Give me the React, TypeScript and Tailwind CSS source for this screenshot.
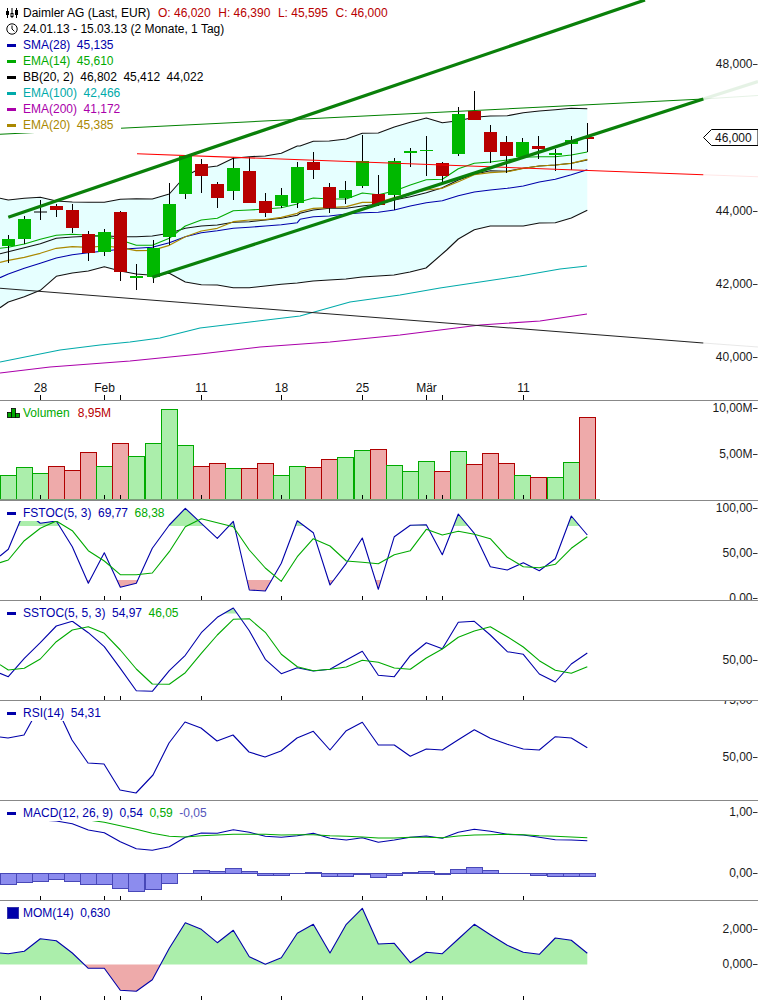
import React from "react";

const CX = Array.from({ length: 37 }, (_, i) => Math.floor(8.3 + 16.08 * i));
const TICKS = [40, 104, 120, 201, 281, 362, 426, 442, 523];
const BLUE = "#0000aa";
const GREEN = "#00aa00";
const P: [number, number, number, number, number][] = [
  [235, 263, 239, 246, 1], [216, 244, 219, 239, 1], [200, 220, 211.5, 212.5, 2], [204, 217, 206, 210, 0],
  [204, 233, 210, 228, 0], [231, 261, 234, 253, 0], [229, 256, 232, 252, 1], [211, 281, 212, 272, 0],
  [264, 290, 276, 278, 1], [240, 283, 248, 277, 1], [183, 245, 204, 237, 1], [155, 199, 156, 194, 1],
  [159, 193, 164, 176, 0], [182, 208, 184, 198, 0], [157, 200, 168, 191, 1], [157, 203, 171, 203, 0],
  [193, 217, 201, 213, 0], [188, 208, 195, 206, 1], [162, 208, 167, 203, 1], [152, 179, 162, 170, 0],
  [183, 213, 187, 208, 0], [181, 204, 190, 198, 1], [135, 188, 161, 186, 1], [175, 206, 194, 205, 0],
  [158, 210, 161, 195, 1], [148, 167, 151, 153, 1], [136, 176, 150, 151, 1], [162, 183, 163, 176, 0],
  [107, 156, 114, 154, 1], [91, 120, 111, 120, 0], [125, 163, 132, 152, 0], [136, 173, 142, 156, 0],
  [138, 157, 142, 157, 1], [136, 159, 146, 149, 0], [149, 171, 153, 155, 1], [136, 170, 140, 144, 1], [123, 152, 137, 139, 0],
];
const VOL: [number, number][] = [
  [475, 1], [467, 1], [473, 1], [466, 0], [470, 0], [452, 0], [466, 1], [443, 0], [456, 1], [443, 1], [409, 1], [445, 1], [466, 0],
  [463, 0], [468, 1], [468, 0], [463, 0], [475, 1], [466, 1], [467, 0], [459, 0], [457, 1], [450, 1], [449, 0], [465, 1], [471, 1],
  [461, 1], [471, 0], [451, 1], [464, 0], [453, 0], [463, 0], [475, 1], [477, 0], [477, 1], [462, 1], [417, 0],
];
const HIST = [884, 882, 881, 879, 881, 884, 884, 888, 891, 889, 883, 873, 870, 871, 868, 871, 875, 875, 873, 872, 876, 876, 874, 877, 875, 872, 871, 874, 869, 867, 870, 873, 873, 875, 876, 876, 876];

type Pt = [number, number];
const z = (ox: number, oy: number, a: Pt[]): Pt[] => a.map(([x, y]) => [ox + x / 3, oy + y / 3]);
const s = (a: Pt[]) => a.map(([x, y]) => `${x.toFixed(1)},${y.toFixed(1)}`).join(" ");
const join = (oy: number, a: Pt[], b: Pt[]) => [...z(0, oy, a), ...z(300, oy, b)];

const UPPER = join(140, [[0, 175], [25, 180], [73, 175], [121, 172], [169, 183], [217, 186], [265, 187], [313, 187], [361, 178], [409, 176], [457, 177], [508, 162], [556, 108], [604, 84], [652, 78], [700, 55], [748, 50], [796, 48], [844, 40], [892, 18]], []).concat(
  z(300, 80, [[0, 198], [40, 184], [88, 183], [139, 177], [187, 160], [235, 159], [283, 141], [331, 127], [379, 114], [427, 128], [475, 122], [523, 112], [571, 108], [622, 107], [670, 98], [718, 93], [766, 89], [814, 85], [862, 86]]));
const LOWER = join(140, [[0, 503], [25, 486], [73, 470], [121, 451], [169, 409], [217, 399], [265, 393], [313, 380], [361, 393], [409, 402], [457, 406], [508, 400], [556, 426], [604, 434], [652, 435], [700, 443], [748, 443], [796, 438], [844, 433], [892, 429]], []).concat(
  [[313, 281], [329, 280], [346, 279], [362, 277], [378, 276], [394, 275], [410, 272], [426, 268]] as Pt[],
  z(300, 80, [[440, 510], [475, 477], [523, 449], [571, 438], [622, 438], [670, 438], [718, 429], [766, 428], [814, 414], [862, 391]]));
const MID = join(140, [[0, 341], [25, 335], [73, 323], [121, 311], [169, 295], [217, 291], [265, 289], [313, 287], [361, 290], [409, 290], [457, 288], [508, 280], [556, 265], [604, 258], [652, 255], [700, 247], [748, 245], [796, 240], [844, 235], [892, 226]], []).concat(
  z(300, 80, [[0, 400], [40, 390], [88, 385], [139, 385], [187, 378], [235, 372], [283, 360], [331, 350], [379, 338], [427, 323], [475, 300], [523, 283], [571, 272], [622, 274], [670, 265], [718, 258], [766, 255], [814, 250], [862, 240]]));
const E14 = join(140, [[0, 325], [25, 322], [73, 312], [121, 298], [169, 286], [217, 283], [265, 286], [313, 289], [361, 300], [409, 316], [457, 316], [508, 295], [556, 258], [604, 240], [652, 235], [700, 212], [748, 210], [796, 207], [844, 203], [892, 192]], []).concat(
  z(300, 80, [[0, 365], [40, 354], [88, 357], [139, 357], [187, 339], [235, 344], [283, 333], [331, 315], [379, 299], [427, 298], [475, 266], [523, 250], [571, 246], [622, 240], [670, 232], [718, 230], [766, 230], [814, 225], [862, 216]]));
const E20 = join(140, [[0, 367], [25, 361], [73, 352], [121, 340], [169, 325], [217, 320], [265, 322], [313, 318], [361, 323], [409, 332], [457, 331], [508, 316], [556, 290], [604, 273], [652, 265], [700, 245], [748, 240], [796, 239], [844, 232], [892, 220]], []).concat(
  z(300, 80, [[0, 395], [40, 385], [88, 383], [139, 380], [187, 367], [235, 367], [283, 353], [331, 340], [379, 330], [427, 325], [475, 305], [523, 284], [571, 278], [622, 275], [670, 265], [718, 258], [766, 255], [814, 250], [862, 238]]));
const S28 = join(140, [[0, 413], [25, 402], [73, 385], [121, 370], [169, 354], [217, 344], [265, 338], [313, 333], [361, 328], [409, 325], [457, 322], [508, 308], [556, 290], [604, 278], [652, 272], [700, 265], [748, 262], [796, 258], [844, 254], [892, 248]], []).concat(
  z(300, 80, [[0, 418], [40, 410], [88, 408], [139, 402], [187, 398], [235, 397], [283, 390], [331, 378], [379, 368], [427, 362], [475, 347], [523, 336], [571, 330], [622, 325], [670, 318], [718, 306], [766, 298], [814, 284], [862, 269]]));
const E100: Pt[] = [[0, 362], [60, 350], [100, 345], [130, 342], [160, 338], [200, 328], [250, 322], [300, 316], [350, 302], [400, 295], [440, 288], [480, 282], [520, 276], [560, 269], [587, 266]];
const E200: Pt[] = [[0, 373], [50, 367], [130, 361], [200, 354], [260, 347], [330, 342], [400, 335], [480, 325], [540, 321], [587, 314]];

const FB = join(500, [[0, 168], [25, 148], [73, 33], [121, 70], [169, 63], [217, 140], [265, 250], [313, 158], [361, 262], [409, 250], [457, 145], [508, 75], [556, 25], [604, 70], [652, 115], [700, 64], [748, 270], [796, 273], [844, 190], [892, 62]],
  [[40, 98], [90, 255], [139, 190], [187, 114], [235, 268], [283, 110], [331, 76], [379, 74], [427, 164], [475, 42], [523, 100], [571, 200], [622, 210], [670, 188], [718, 212], [766, 176], [814, 48], [862, 105]]);
const FG = join(500, [[0, 188], [25, 180], [73, 122], [121, 85], [169, 63], [217, 92], [265, 152], [313, 183], [361, 224], [409, 224], [457, 219], [508, 155], [556, 80], [604, 56], [652, 68], [700, 80], [748, 150], [796, 204], [844, 244], [892, 170]],
  [[40, 116], [90, 138], [139, 183], [187, 187], [235, 191], [283, 164], [331, 152], [379, 88], [427, 105], [475, 94], [523, 103], [571, 116], [622, 172], [670, 200], [718, 203], [766, 193], [814, 145], [862, 110]]);
const SB = join(500, [[0, 520], [25, 530], [73, 475], [121, 428], [169, 378], [217, 364], [265, 398], [313, 440], [361, 505], [409, 572], [457, 574], [508, 512], [556, 466], [604, 398], [652, 352], [700, 324], [748, 392], [796, 478], [844, 521], [892, 503]],
  [[40, 513], [90, 508], [139, 480], [187, 454], [235, 526], [283, 530], [331, 467], [379, 428], [427, 446], [475, 367], [523, 364], [571, 405], [622, 455], [670, 463], [718, 522], [766, 546], [814, 492], [862, 459]]);
const SG = join(500, [[0, 494], [25, 510], [73, 505], [121, 477], [169, 425], [217, 390], [265, 380], [313, 400], [361, 450], [409, 507], [457, 552], [508, 553], [556, 518], [604, 460], [652, 405], [700, 358], [748, 356], [796, 397], [844, 463], [892, 500]],
  [[40, 512], [90, 508], [139, 501], [187, 481], [235, 487], [283, 504], [331, 508], [379, 474], [427, 447], [475, 412], [523, 393], [571, 380], [622, 410], [670, 441], [718, 482], [766, 511], [814, 520], [862, 500]]);
const RSI: Pt[] = ([[0, 737], [8, 738], [24, 735], [40, 706], [56, 706], [72, 740], [88, 763], [104, 764], [120, 790], [136, 793], [153, 775], [169, 743], [185, 722], [201, 728], [217, 741], [233, 735], [249, 752], [265, 757], [281, 751], [297, 738]] as Pt[]).concat(
  z(300, 500, [[40, 694], [90, 750], [139, 692], [187, 667], [235, 735], [283, 735], [331, 769], [379, 747], [427, 750], [475, 719], [523, 689], [571, 715], [622, 733], [670, 747], [718, 750], [766, 710], [814, 714], [862, 743]]));
const MB = join(790, [[0, 82], [121, 90], [169, 93], [217, 101], [265, 120], [313, 128], [361, 155], [409, 176], [457, 181], [508, 170], [556, 142], [604, 129], [652, 130], [700, 119], [748, 127], [796, 139], [844, 142], [892, 137]],
  [[40, 130], [90, 145], [139, 150], [187, 143], [235, 157], [283, 150], [331, 142], [379, 138], [427, 145], [475, 127], [523, 118], [571, 124], [622, 133], [670, 135], [718, 142], [766, 149], [814, 150], [862, 152]]);
const MG = join(790, [[0, 50], [25, 60], [73, 68], [169, 78], [217, 85], [265, 90], [313, 97], [361, 107], [409, 118], [457, 130], [508, 139], [556, 141], [604, 137], [652, 135], [700, 133], [748, 133], [796, 133], [844, 135], [892, 134]],
  [[40, 134], [90, 137], [139, 139], [187, 141], [235, 144], [283, 144], [331, 142], [379, 142], [427, 143], [475, 138], [523, 135], [571, 134], [622, 133], [670, 134], [718, 137], [766, 139], [814, 141], [862, 143]]);
const MOM = join(790, [[0, 489], [25, 491], [73, 484], [121, 446], [169, 452], [217, 489], [265, 535], [313, 535], [361, 601], [409, 604], [457, 569], [508, 475], [556, 398], [604, 418], [652, 458], [700, 421], [748, 500], [796, 523], [844, 503], [892, 430]],
  [[40, 403], [90, 489], [139, 403], [187, 355], [235, 462], [283, 460], [331, 518], [379, 487], [427, 491], [475, 447], [523, 403], [571, 434], [622, 466], [670, 487], [718, 493], [766, 444], [814, 451], [862, 490]]);

const Line = ({ d, c, w = 1.1, o = 1 }: { d: Pt[]; c: string; w?: number; o?: number }) => (
  <polyline points={s(d)} fill="none" stroke={c} strokeWidth={w} strokeOpacity={o} strokeLinejoin="round" />
);

const Ticks = ({ y, h = 4 }: { y: number; h?: number }) => (
  <g>
    {TICKS.map((x) => (
      <rect key={x} x={x} y={y - h} width={1} height={h} fill="#000" />
    ))}
  </g>
);

const Axis = ({ items }: { items: [string, number][] }) => (
  <g>
    {items.map(([t, y]) => (
      <g key={t + y}>
        <text x={752.5} y={y + 4.3} textAnchor="end" fontSize={12} fill="#1a1a1a">
          {t}
        </text>
        <rect x={753} y={y} width={4.5} height={1} fill="#333333" />
      </g>
    ))}
  </g>
);

const Clipped = ({ id, box, d, base, fill }: { id: string; box: [number, number]; d: Pt[]; base: number; fill: string }) => (
  <g>
    <clipPath id={id}>
      <rect x={0} y={box[0]} width={758} height={box[1] - box[0]} />
    </clipPath>
    <polygon clipPath={`url(#${id})`} fill={fill} points={s([[d[0][0], base], ...d, [d[d.length - 1][0], base]])} />
  </g>
);

const Panel = ({ top, h, border = true, children, legend }: { top: number; h: number; border?: boolean; children: React.ReactNode; legend: React.ReactNode }) => (
  <div className={`relative w-full overflow-hidden ${border ? "border-b border-[#888888]" : ""}`}>
    <svg width={758} height={h} viewBox={`0 ${top} 758 ${h}`} className="block">
      {children}
    </svg>
    {legend}
  </div>
);

const Dash = ({ c }: { c: string }) => <span className="mr-[7px] ml-[2px] h-[3px] w-[9px] shrink-0" style={{ backgroundColor: c }} />;

const Row = ({ c, swatch, gap, items }: { c: string; swatch?: React.ReactNode; gap?: boolean; items: [string, string][] }) => (
  <div className={`flex h-4 w-fit items-center bg-white pr-[7px] pl-[5px] leading-4 ${gap ? "gap-[8px]" : "gap-[6.5px]"}`}>
    <div className="flex items-center" style={{ color: c }}>
      {swatch ?? <Dash c={c} />}
      <span>{items[0][0]}</span>
    </div>
    {items.slice(1).map(([t, col]) => (
      <span key={t} style={{ color: col }}>
        {t}
      </span>
    ))}
  </div>
);

const SubLegend = ({ c, swatch, gap, items }: { c: string; swatch?: React.ReactNode; gap?: boolean; items: [string, string][] }) => (
  <div className="absolute top-1 left-0">
    <Row c={c} swatch={swatch} gap={gap} items={items} />
  </div>
);

const Candle = () => (
  <svg width={12} height={11} viewBox="0 0 12 11" className="mr-[5px] ml-[1px] shrink-0" fill="none" stroke="#000" strokeWidth={1}>
    <path d="M1.5 0v10M6 0v10M10.5 0v10" />
    <rect x={0.5} y={3.5} width={2} height={3} fill="#000" />
    <rect x={5} y={5.5} width={2} height={3} fill="#fff" />
    <rect x={9.5} y={2.5} width={2} height={4} fill="#000" />
  </svg>
);

const Clock = () => (
  <svg width={12} height={12} viewBox="0 0 12 12" className="mr-[5px] ml-[1px] shrink-0" fill="none" stroke="#000" strokeWidth={1}>
    <circle cx={6} cy={6} r={5.2} />
    <path d="M6 2.5V6l2.4 2.4" />
  </svg>
);

const VolIcon = () => (
  <svg width={13} height={10} viewBox="0 0 13 10" className="mr-[3px] ml-[2px] shrink-0" fill={GREEN} stroke="#000" strokeWidth={0.8}>
    <rect x={0.5} y={4.5} width={4} height={5} />
    <rect x={4.5} y={0.5} width={4} height={9} />
    <rect x={8.5} y={5.5} width={4} height={4} />
  </svg>
);

export default function App() {
  const cyan = s([...UPPER, ...[...LOWER].reverse()]);
  return (
    <div className="flex h-[1000px] w-[758px] flex-col overflow-hidden bg-white font-['Liberation_Sans',Arial,sans-serif] text-[12px]">
      <Panel
        top={0}
        h={400}
        legend={
          <div className="absolute top-[5px] left-0 flex flex-col">
            <div className="flex h-4 w-fit items-center gap-[7.6px] bg-white pr-[7px] pl-[5px] text-[#b80000]">
              <div className="flex items-center text-black">
                <Candle />
                <span>Daimler AG (Last, EUR)</span>
              </div>
              <span>O: 46,020</span>
              <span>H: 46,390</span>
              <span>L: 45,595</span>
              <span>C: 46,000</span>
            </div>
            <div className="flex h-4 w-fit items-center bg-white pr-[7px] pl-[5px] text-black">
              <Clock />
              <span>24.01.13 - 15.03.13 (2 Monate, 1 Tag)</span>
            </div>
            <Row c={BLUE} items={[["SMA(28)", ""], ["45,135", BLUE]]} />
            <Row c={GREEN} items={[["EMA(14)", ""], ["45,610", GREEN]]} />
            <Row c="#000000" items={[["BB(20, 2)", ""], ["46,802", "#000"], ["45,412", "#000"], ["44,022", "#000"]]} />
            <Row c="#00aaaa" items={[["EMA(100)", ""], ["42,466", "#00aaaa"]]} />
            <Row c="#aa00aa" items={[["EMA(200)", ""], ["41,172", "#aa00aa"]]} />
            <Row c="#aa8800" items={[["EMA(20)", ""], ["45,385", "#aa8800"]]} />
          </div>
        }
      >
        <polygon points={cyan} fill="#e6ffff" />
        <Line d={E100} c="#00aaaa" />
        <Line d={E200} c="#aa00aa" />
        <Line d={UPPER} c="#111111" />
        <Line d={LOWER} c="#111111" />
        <Line d={MID} c="#111111" />
        <Line d={S28} c={BLUE} />
        <Line d={E20} c="#aa8800" w={1.2} />
        <Line d={E14} c={GREEN} />
        {P.map(([a, b, c, d, g], i) => (
          <g key={i}>
            <rect x={CX[i]} y={a} width={1} height={b - a} fill="#000" />
            <rect x={CX[i] - 6} y={c} width={13} height={d - c} fill={g === 1 ? "#00b800" : g === 2 ? "#000" : "#b80000"} />
          </g>
        ))}
        <Line d={[[0, 288.3], [703.3, 343]]} c="#222222" />
        <Line d={[[703.3, 343], [758, 347]]} c="#222222" o={0.1} />
        <Line d={[[137, 153.7], [703.3, 174.7]]} c="#ff0000" />
        <Line d={[[703.3, 174.7], [758, 176.7]]} c="#ff0000" o={0.1} />
        <Line d={[[0, 134.3], [703.3, 99]]} c="#008000" />
        <Line d={[[703.3, 99], [758, 95.5]]} c="#008000" o={0.1} />
        <Line d={[[8.3, 217.3], [645, 0]]} c="#0a800a" w={3.2} />
        <Line d={[[152.3, 277.3], [703.3, 99]]} c="#0a800a" w={3.2} />
        <Line d={[[703.3, 99], [758, 81.5]]} c="#008000" w={3.2} o={0.1} />
        <polygon points="703.5,137.5 711.5,129.5 758,129.5 758,145.5 711.5,145.5" fill="#fff" stroke="#000" strokeWidth={1} />
        <text x={715} y={142} fontSize={12} fill="#111">46,000</text>
        <Axis items={[["48,000", 64], ["44,000", 211], ["42,000", 284], ["40,000", 357]]} />
        {([["28", 40], ["Feb", 104], ["11", 201], ["18", 281], ["25", 362], ["Mär", 426], ["11", 523]] as [string, number][]).map(([t, x]) => (
          <text key={t + x} x={x + 0.5} y={392} textAnchor="middle" fontSize={12} fill="#111">
            {t}
          </text>
        ))}
        <Ticks y={400} h={5} />
      </Panel>

      <Panel
        top={401}
        h={99}
        legend={<SubLegend c={GREEN} gap swatch={<VolIcon />} items={[["Volumen", ""], ["8,95M", "#b80000"]]} />}
      >
        {VOL.map(([t, g], i) => (
          <rect key={i} x={CX[i] - 7.5} y={t + 0.5} width={16} height={499 - t} fill={g ? "#abeeab" : "#eeaaaa"} stroke={g ? "#00aa00" : "#b00000"} strokeWidth={1} />
        ))}
        <Ticks y={499} />
        <rect x={0} y={499} width={600} height={1} fill="#7aa07a" />
        <Axis items={[["10,00M", 408], ["5,00M", 454]]} />
      </Panel>

      <Panel
        top={501}
        h={99}
        legend={<SubLegend c={BLUE} items={[["FSTOC(5, 3)", ""], ["69,77", BLUE], ["68,38", GREEN]]} />}
      >
        <Clipped id="f1" box={[501, 526]} d={FB} base={600} fill="#abeeab" />
        <Clipped id="f2" box={[580, 600]} d={FB} base={500} fill="#eeaaaa" />
        <Line d={FB} c={BLUE} />
        <Line d={FG} c={GREEN} />
        <Ticks y={600} />
        <Axis items={[["100,00", 508], ["50,00", 553], ["0,00", 598]]} />
      </Panel>

      <Panel
        top={601}
        h={99}
        legend={<SubLegend c={BLUE} items={[["SSTOC(5, 5, 3)", ""], ["54,97", BLUE], ["46,05", GREEN]]} />}
      >
        <Clipped id="s1" box={[601, 613.5]} d={SB} base={700} fill="#abeeab" />
        <Line d={SB} c={BLUE} />
        <Line d={SG} c={GREEN} />
        <Ticks y={700} />
        <Axis items={[["50,00", 660]]} />
      </Panel>

      <Panel
        top={701}
        h={99}
        legend={<SubLegend c={BLUE} items={[["RSI(14)", ""], ["54,31", BLUE]]} />}
      >
        <Line d={RSI} c={BLUE} />
        <Axis items={[["75,00", 700], ["50,00", 757]]} />
      </Panel>

      <Panel
        top={801}
        h={99}
        legend={<SubLegend c={BLUE} items={[["MACD(12, 26, 9)", ""], ["0,54", BLUE], ["0,59", GREEN], ["-0,05", "#5555bb"]]} />}
      >
        <Line d={MB} c={BLUE} />
        <Line d={MG} c={GREEN} />
        {HIST.map((v, i) => (
          <rect key={i} x={CX[i] - 7.5} y={Math.min(v, 873) + 0.5} width={16} height={Math.abs(v - 873)} fill="#8c8cee" stroke="#4848b8" strokeWidth={1} />
        ))}
        <rect x={0} y={873} width={595} height={1} fill="#4848b8" />
        <Ticks y={900} />
        <Axis items={[["1,00", 812], ["0,00", 873]]} />
      </Panel>

      <Panel
        top={901}
        h={99}
        border={false}
        legend={
          <SubLegend
            c={BLUE}
            swatch={<span className="mr-1 ml-[2px] h-3 w-3 shrink-0 border border-[#3333aa] bg-[#0000aa]" />}
            items={[["MOM(14)", ""], ["0,630", BLUE]]}
          />
        }
      >
        <Clipped id="m1" box={[901, 964.5]} d={MOM} base={1000} fill="#abeeab" />
        <Clipped id="m2" box={[964.5, 1000]} d={MOM} base={900} fill="#eeaaaa" />
        <Line d={MOM} c={BLUE} />
        <Ticks y={1000} />
        <Axis items={[["2,000", 929], ["0,000", 964]]} />
      </Panel>
    </div>
  );
}
